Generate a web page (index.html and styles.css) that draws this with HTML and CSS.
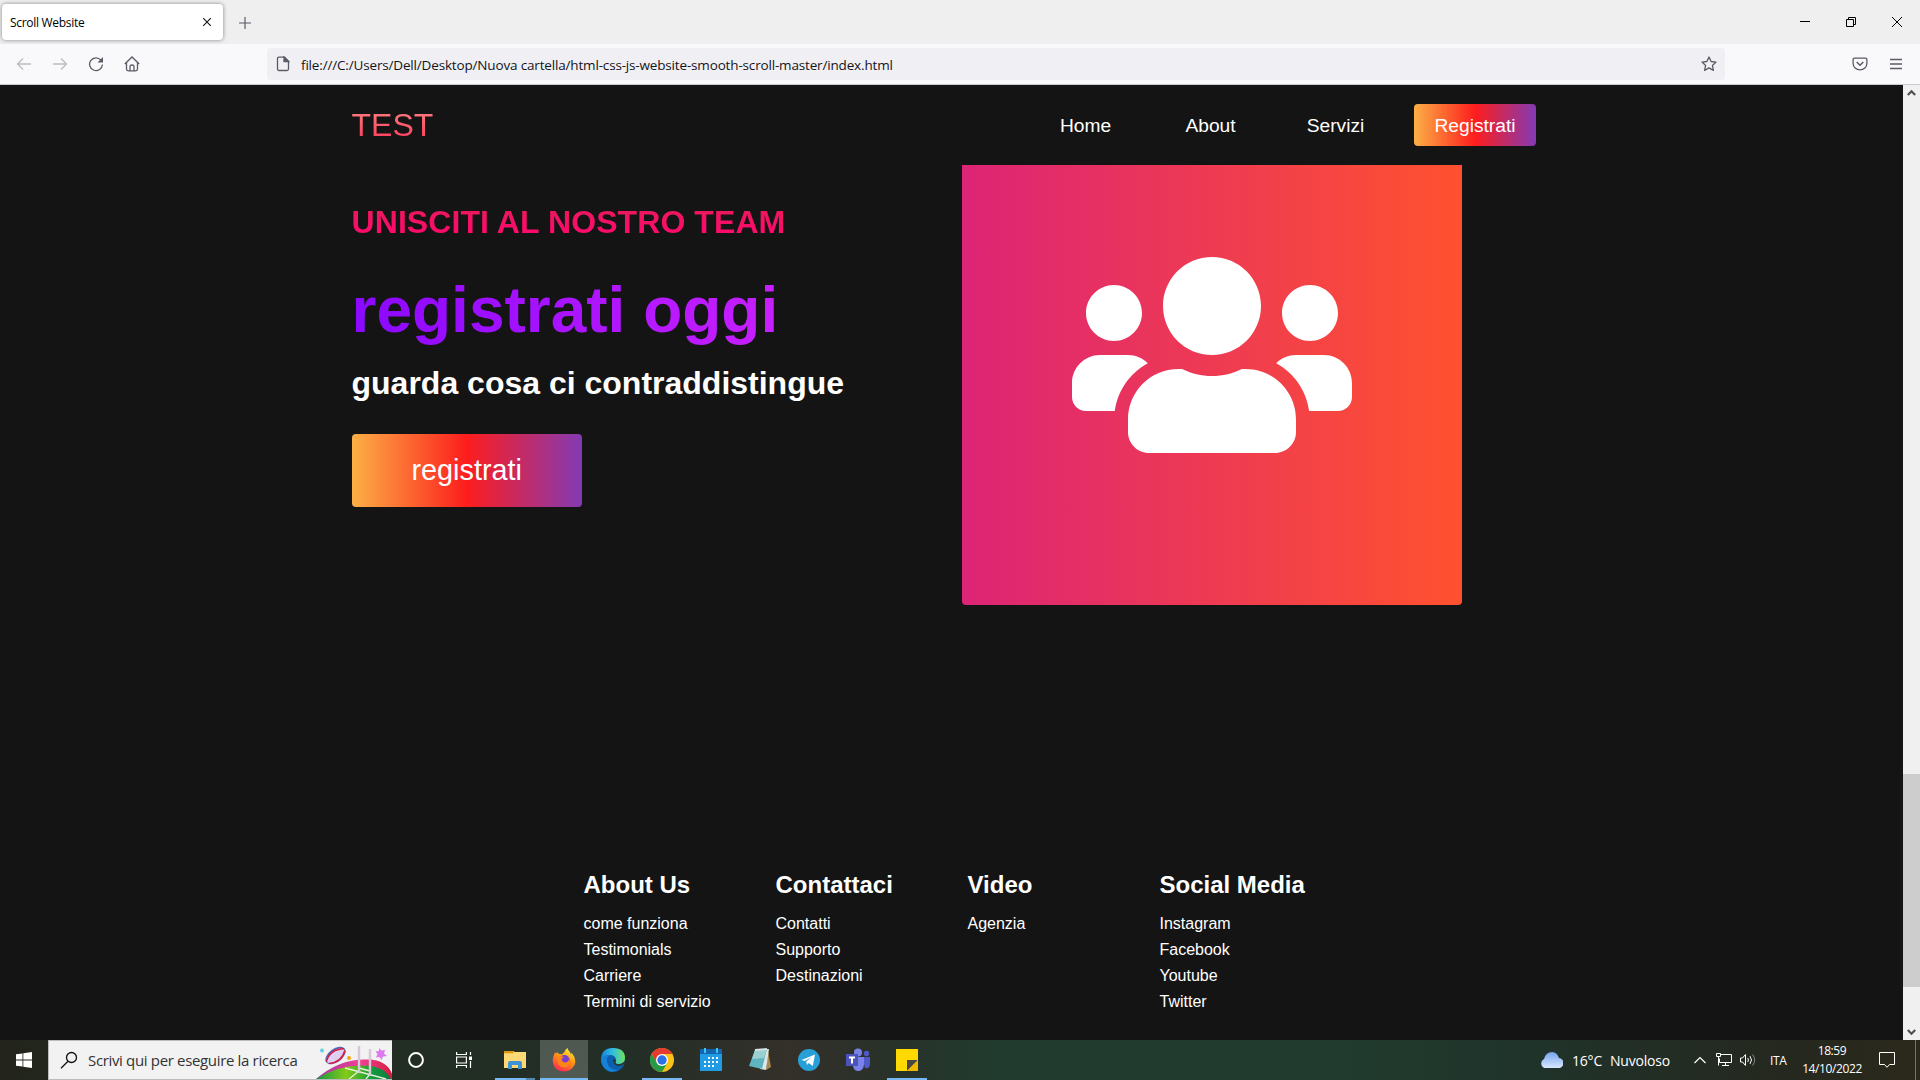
FILE: index.html
```html
<!DOCTYPE html>
<html lang="it">
<head>
<meta charset="utf-8">
<title>Scroll Website</title>
<link rel="stylesheet" href="styles.css">
</head>
<body>
<div class="tabs">
  <div class="tab"><span class="tab-title">Scroll Website</span>
    <svg width="10" height="10" viewBox="0 0 10 10"><path d="M1.200 1.200l7.600 7.600M8.800 1.200L1.200 8.800" stroke="#15141a" stroke-width="1.100"/></svg>
  </div>
  <svg class="newtab" width="12" height="12" viewBox="0 0 12 12"><path d="M6 0v12M0 6h12" stroke="#5b5b66" stroke-width="1.200"/></svg>
  <div class="winctl">
    <svg width="10" height="10" viewBox="0 0 10 10"><path d="M0 4.500h10" stroke="#000"/></svg>
    <svg width="10" height="10" viewBox="0 0 10 10" fill="none" stroke="#000"><path d="M.5 2.500h7v7h-7zM2.500 2.500v-2h7v7h-2"/></svg>
    <svg width="10" height="10" viewBox="0 0 10 10"><path d="M0 0l10 10M10 0L0 10" stroke="#000"/></svg>
  </div>
</div>
<div class="toolbar">
  <div class="navbtns">
    <svg width="16" height="16" viewBox="0 0 16 16" class="ic dim"><path d="M15 8H1.500M7 2.500L1.500 8 7 13.500"/></svg>
    <svg width="16" height="16" viewBox="0 0 16 16" class="ic dim"><path d="M1 8h13.500M9 2.500L14.500 8 9 13.500"/></svg>
    <svg width="16" height="16" viewBox="0 0 16 16" class="ic"><path d="M13 4.200A6.400 6.400 0 1 0 14.400 8.500"/><path d="M15 1v5.500H9.500z" fill="#5b5b66" stroke="none"/></svg>
    <svg width="16" height="16" viewBox="0 0 16 16" class="ic"><path d="M.8 8L8 1l7.200 7M2.500 6.800V13q0 1.800 1.800 1.800h7.400q1.800 0 1.800-1.800V6.800M6 14.500V10.500Q6 9 8 9t2 1.500v4"/></svg>
  </div>
  <div class="urlbar">
    <svg width="14" height="16" viewBox="0 0 14 16" class="ic"><path d="M3 1.200h5.500l4 4V13q0 1.500-1.500 1.500H3Q1.500 14.500 1.500 13V2.700Q1.500 1.200 3 1.200z"/><path d="M8 1v4.700h4.700z" fill="#5b5b66"/></svg>
    <span class="url">file:///C:/Users/Dell/Desktop/Nuova cartella/html-css-js-website-smooth-scroll-master/index.html</span>
    <svg width="16" height="16" viewBox="0 0 16 16" class="ic"><path d="M8 1l2.100 4.500 4.900.6-3.600 3.300 1 5L8 11.900l-4.400 2.500 1-5L1 6.100l4.900-.6z" stroke-linejoin="round"/></svg>
  </div>
  <div class="rightbtns">
    <svg width="16" height="16" viewBox="0 0 16 16" class="ic"><path d="M2.500 2.200h11q1.400 0 1.400 1.400v3.600a6.900 6.700 0 0 1-13.800 0V3.600q0-1.400 1.400-1.400z"/><path d="M4.700 6L8 9.200 11.300 6" stroke-width="1.500"/></svg>
    <svg width="12" height="12" viewBox="0 0 12 12" class="ic"><path d="M0 1.500h12M0 6h12M0 10.500h12"/></svg>
  </div>
</div>
<div class="viewport">
  <div class="page">
    <header class="navbar">
      <div class="logo">TEST</div>
      <nav class="menu"><a>Home</a><a>About</a><a>Servizi</a><div class="btnwrap"><a class="button">Registrati</a></div></nav>
    </header>
    <main class="services">
      <div class="pitch">
        <h1>UNISCITI AL NOSTRO TEAM</h1>
        <h2>registrati oggi</h2>
        <p>guarda cosa ci contraddistingue</p>
        <a class="cta">registrati</a>
      </div>
      <div class="card">
        <svg width="280" height="224" viewBox="0 0 640 512" fill="#fff"><path d="M96 224c35.300 0 64-28.700 64-64s-28.700-64-64-64-64 28.700-64 64 28.700 64 64 64zm448 0c35.300 0 64-28.700 64-64s-28.700-64-64-64-64 28.700-64 64 28.700 64 64 64zm32 32h-64c-17.600 0-33.500 7.100-45.100 18.600 40.300 22.100 68.900 62 75.100 109.400h66c17.700 0 32-14.300 32-32v-32c0-35.300-28.700-64-64-64zm-256 0c61.900 0 112-50.100 112-112S381.900 32 320 32 208 82.100 208 144s50.100 112 112 112zm76.800 32h-8.300c-20.800 10-43.900 16-68.500 16s-47.600-6-68.500-16h-8.300C179.600 288 128 339.600 128 403.200V432c0 26.500 21.500 48 48 48h288c26.500 0 48-21.500 48-48v-28.800c0-63.600-51.600-115.200-115.200-115.200zm-223.700-13.400C161.500 263.100 145.600 256 128 256H64c-35.300 0-64 28.700-64 64v32c0 17.700 14.300 32 32 32h65.900c6.300-47.400 34.900-87.300 75.200-109.400z"/></svg>
      </div>
    </main>
    <footer class="footer">
      <div class="col"><h3>About Us</h3><a>come funziona</a><a>Testimonials</a><a>Carriere</a><a>Termini di servizio</a></div>
      <div class="col"><h3>Contattaci</h3><a>Contatti</a><a>Supporto</a><a>Destinazioni</a></div>
      <div class="col"><h3>Video</h3><a>Agenzia</a></div>
      <div class="col"><h3>Social Media</h3><a>Instagram</a><a>Facebook</a><a>Youtube</a><a>Twitter</a></div>
    </footer>
  </div>
  <div class="scrollbar">
    <svg width="17" height="17" viewBox="0 0 17 17"><path d="M4.800 10L8.500 6.300 12.200 10" fill="none" stroke="#505050" stroke-width="2.200"/></svg>
    <div class="thumb"></div>
    <svg width="17" height="17" viewBox="0 0 17 17"><path d="M4.800 7L8.500 10.700 12.200 7" fill="none" stroke="#505050" stroke-width="2.200"/></svg>
  </div>
</div>
<div class="taskbar">
  <div class="start"><svg width="16" height="16" viewBox="0 0 16 16" fill="#fff"><path d="M0 2.300L6.500 1.400v6.200H0zM7.300 1.300L16 0v7.600H7.300zM0 8.400h6.500v6.200L0 13.700zM7.300 8.400H16V16l-8.700-1.300z"/></svg></div>
  <div class="search">
    <svg width="18" height="18" viewBox="0 0 18 18" fill="none" stroke="#111" stroke-width="1.300"><circle cx="11.500" cy="6.500" r="5"/><path d="M8 10.200L1 17.200"/></svg>
    <span class="search-text">Scrivi qui per eseguire la ricerca</span>
    <svg class="rugby" width="76" height="38" viewBox="0 0 76 38">
      <defs><linearGradient id="grass" x1="0" x2="1"><stop offset="0" stop-color="#159447"/><stop offset=".4" stop-color="#83cc18"/><stop offset=".75" stop-color="#159a3d"/><stop offset="1" stop-color="#087b47"/></linearGradient>
      <linearGradient id="band" x1="0" x2="1"><stop offset="0" stop-color="#a33aa0"/><stop offset=".6" stop-color="#f04095"/><stop offset="1" stop-color="#d51c3c"/></linearGradient></defs>
      <path d="M0 38Q24 17 52 18.500Q71 19 76 33V38z" fill="url(#band)"/>
      <path d="M0 38Q20 25 45 24.500Q68 24 75 38z" fill="url(#grass)"/>
      <path d="M29 27L70 38M43 30L33 38M54 33L50 38M43 27L54 30" fill="none" stroke="#e6f6d4" stroke-width="1.300"/>
      <path d="M43 5V32M54 8V35" fill="none" stroke="#d8c7d6" stroke-width="2.400"/>
      <g transform="rotate(-36 19.500 14.500)"><ellipse cx="19.500" cy="14.500" rx="11.500" ry="6.800" fill="#5a62b4"/><ellipse cx="19.500" cy="15" rx="10.500" ry="5.200" fill="#ded0f2"/><path d="M8.500 14Q19 6 30.500 14M9.500 17Q20 24 30 16" fill="none" stroke="#d41c3e" stroke-width="1.500"/></g>
      <circle cx="6" cy="9.500" r="2" fill="#63cfe8"/><circle cx="33" cy="17" r="2" fill="#f3a712"/>
      <path d="M63 7l2.500 2.500 3.500-.5-1 3.500 3 2.500-4 .5-1.500 3.500-2-3-3.500.5 1.500-3.500-2-2.500 3.500-.5z" fill="#dd78ef"/>
    </svg>
  </div>
  <div class="sys"><svg width="16" height="16" viewBox="0 0 16 16"><circle cx="8" cy="8" r="6.900" fill="none" stroke="#fff" stroke-width="2"/></svg></div>
  <div class="sys"><svg width="16" height="16" viewBox="0 0 16 16" fill="none" stroke="#fff" stroke-width="1.200"><path d="M.6 0v2.500h9.800V0M.6 5h9.800v6H.6zM.6 16v-2.500h9.800V16M14.500 0v3M14.500 9v7"/><path d="M13 4.500h3V8h-3z" fill="#fff" stroke="none"/></svg></div>
  <div class="apps">
    <div class="app open stacked"><svg width="24" height="24" viewBox="0 0 24 24"><path d="M1 3h9l2 1h10v16H1z" fill="#f8cb57"/><path d="M1 3h9v2.500H1z" fill="#dc9710"/><path d="M1 5.500h9l2-1.500h11v16H1z" fill="#ffd975"/><path d="M5 21v-6q0-2 2-2h10q2 0 2 2v6h-4v-4H9v4z" fill="#3f94d5"/></svg></div>
    <div class="app active"><svg width="24" height="24" viewBox="0 0 24 24"><defs><linearGradient id="fx" x1=".8" y1="0" x2=".3" y2="1"><stop offset="0" stop-color="#fff33d"/><stop offset=".45" stop-color="#ff980e"/><stop offset="1" stop-color="#ff2757"/></linearGradient></defs><path d="M2 7l.8-2.500 1.400 1L5 4l2 2 3 .2L12.500 4q.5-2.500 3-4 .3 2.500 2.500 4l.8 2 1-1q5.200 6 2.700 12-3.500 6.500-10.500 6.500Q4 23 1.500 17-.3 11 2 7z" fill="url(#fx)"/><circle cx="12.500" cy="12" r="5" fill="#7540cf"/><path d="M5 8.500q3-1 7 .5L9.500 11q.5 3 3.500 3.500 3 0 4-3 1.500 7.500-5 8-7-.5-7-11z" fill="#ff8418"/></svg></div>
    <div class="app"><svg width="24" height="24" viewBox="0 0 24 24"><defs><linearGradient id="ed" x1="0" x2="1"><stop offset="0" stop-color="#1683d8"/><stop offset=".5" stop-color="#32bfdf"/><stop offset="1" stop-color="#70e25c"/></linearGradient></defs><circle cx="12" cy="12" r="12" fill="#0d5fad"/><path d="M0 12Q0 0 12 0t12 10q0 6-7 6-4 0-2-3.500Q15 7 9 7 2 7 0 12z" fill="url(#ed)"/><path d="M0 12q2-5 9-5Q5 9 6 14q2 8 11 8Q8 27 2 18 0 15 0 12z" fill="#1681d8"/><path d="M12.500 11Q11 15 15 17.500q4 1.500 8-1.500l1.500 0v-4q-3 4-7 4-4 0-2.500-3.500Q14.500 10.500 12.500 11z" fill="#263b35"/></svg></div>
    <div class="app open"><svg width="24" height="24" viewBox="0 0 24 24"><circle cx="12" cy="12" r="12" fill="#fbc116"/><path d="M1.600 6A12 12 0 0 1 22.400 6H12l-5.200 9z" fill="#e53b2f"/><path d="M1.600 6A12 12 0 0 0 12 24l5.200-9H6.800z" fill="#259b48"/><circle cx="12" cy="12" r="6" fill="#fff"/><circle cx="12" cy="12" r="4.700" fill="#2a70e8"/></svg></div>
    <div class="app"><svg width="24" height="24" viewBox="0 0 24 24"><path d="M1 1h22v22H1z" fill="#209ce5"/><path d="M1 1h22v5H1z" fill="#1265ae"/><path d="M5 0h2v5H5zM17 0h2v5h-2z" fill="#3ec4f4"/><path d="M9 10h11M5 14h15M5 18h11" stroke="#fff" stroke-width="2" stroke-dasharray="2 2"/></svg></div>
    <div class="app"><svg width="24" height="24" viewBox="0 0 24 24"><path d="M20 3l3 16-5 3z" fill="#a78850"/><path d="M8 2l13-1-3 21-6-1z" fill="#e1e5e3"/><path d="M7 2l12-1-5 20-13-3z" fill="#5fb4c1"/><path d="M7 2l12-1-3 9-12 1z" fill="#9bd0d3"/><path d="M7 2l12-1" stroke="#d5e2e2" stroke-width="2"/></svg></div>
    <div class="app"><svg width="24" height="24" viewBox="0 0 24 24"><circle cx="12" cy="12" r="11" fill="#279fd9"/><path d="M4.500 12L18 6.500 15.800 18l-4-3-2 2-.5-3.500 5.500-4.500-7 4z" fill="#fff"/></svg></div>
    <div class="app"><svg width="24" height="24" viewBox="0 0 24 24"><circle cx="12" cy="4.500" r="4" fill="#7b83eb"/><circle cx="20.500" cy="5.500" r="2.700" fill="#5059c9"/><path d="M16 9h8v7q0 5-5 4z" fill="#5059c9"/><path d="M7 9h11v8q-1 6-6 6-4 0-5-5z" fill="#7b83eb"/><path d="M0 6h12v12H0z" fill="#4b53bc"/><path d="M3 8.500h6v2H7v5H5v-5H3z" fill="#fff"/></svg></div>
    <div class="app open"><svg width="24" height="24" viewBox="0 0 24 24"><path d="M1 1h22v22H1z" fill="#ffda00"/><path d="M12 23V12h11z" fill="#474747"/><path d="M12 23l11-11v11z" fill="#efb700"/></svg></div>
  </div>
  <div class="tray">
    <svg class="cloud" width="24" height="16" viewBox="0 0 24 16"><defs><linearGradient id="cl" x2="0" y2="1"><stop offset="0" stop-color="#73a4ed"/><stop offset="1" stop-color="#d9e8ff"/></linearGradient></defs><path d="M5 16a5 5 0 0 1 0-9Q7 0 13 0q5 0 7 6a5 5 0 0 1-1 10z" fill="url(#cl)"/></svg>
    <span class="temp">16°C</span><span class="weather">Nuvoloso</span>
    <svg class="chev" width="12" height="8" viewBox="0 0 12 8"><path d="M.5 7L6 1.500 11.500 7" fill="none" stroke="#fff" stroke-width="1.200"/></svg>
    <svg class="net" width="16" height="14" viewBox="0 0 16 14" fill="none" stroke="#fff"><path d="M5 1.500h10.500v8H3.500v-4M9.500 9.500v3M6 12.500h7M.5.500h4v3h-4zM2.500 3.500v9"/></svg>
    <svg class="vol" width="17" height="14" viewBox="0 0 17 14" fill="none" stroke="#fff"><path d="M.5 5v4h2l3 3.500v-11L2.500 5zM7.700 5q1.600 2 0 4M10 3.200q3 3.800 0 7.600"/><path d="M12.500 1.500q4.500 5.500 0 11" stroke="#85877c"/></svg>
    <span class="lang">ITA</span>
    <div class="clock"><span>18:59</span><span class="date">14/10/2022</span></div>
    <svg class="notif" width="16" height="16" viewBox="0 0 16 16"><path d="M.5.500h15v12h-5L8 15.300 5.500 12.500h-5z" fill="none" stroke="#fff"/></svg>
    <div class="peek"></div>
  </div>
</div>
</body>
</html>
```
FILE: styles.css
```css
* { box-sizing: border-box; margin: 0; padding: 0; }
body { width: 1920px; height: 1080px; overflow: hidden; display: flex; flex-direction: column; font-family: "Open Sans", "Noto Sans", sans-serif; background: #141414; }
svg { display: block; flex: none; }
span { white-space: nowrap; }
.tabs { height: 44px; background: #efefef; display: flex; align-items: center; padding-left: 2px; }
.tab { width: 221px; height: 36px; background: #fff; border-radius: 4px; box-shadow: 0 0 4px rgba(0,0,0,.45); display: flex; align-items: center; justify-content: space-between; padding: 0 11px 0 8px; }
.tab-title { font-size: 12px; letter-spacing: -.3px; color: #000; }
.newtab { margin: 1px 0 0 16px; }
.winctl { margin-left: auto; display: flex; gap: 36px; padding-right: 18px; }
.toolbar { height: 41px; background: #f9f9fb; border-bottom: 1px solid #ccc; display: flex; align-items: center; }
.ic { fill: none; stroke: #5b5b66; stroke-width: 1.300; }
.dim { stroke: #bcbcc1; }
.navbtns { display: flex; gap: 20px; padding-left: 16px; width: 267px; }
.urlbar { width: 1458px; height: 32px; border-radius: 4px; background: #f0f0f4; display: flex; align-items: center; padding: 0 8px 0 9px; }
.url { font-size: 13.500px; letter-spacing: -.165px; color: #15141a; margin-left: 11px; padding-top: 2px; flex: 1; }
.rightbtns { margin-left: auto; display: flex; align-items: center; gap: 22px; padding-right: 18px; }
.viewport { height: 955px; display: flex; background: #141414; }
.page { width: 1903px; font-family: "Liberation Sans", Arial, sans-serif; color: #fff; }
.navbar { height: 80px; width: 1200px; margin-left: 351.500px; display: flex; align-items: center; justify-content: space-between; }
.logo { font-size: 32px; background: linear-gradient(to top, #ff0844, #ffb199); line-height: 80px; -webkit-background-clip: text; background-clip: text; color: transparent; }
.menu { display: flex; align-items: center; font-size: 19.200px; line-height: 22px; }
.menu > a { width: 125px; text-align: center; padding-top: 1px; }
.btnwrap { padding: 0 15.500px 0 16px; }
.button { display: block; width: 122px; padding: 11px 0 9px; text-align: center; border-radius: 4px; background: linear-gradient(to right, #fcb045, #fd1d1d 50%, #833ab4); }
.services { display: flex; height: 687px; padding-left: 351.500px; }
.pitch { width: 610.500px; padding-top: 39px; display: flex; flex-direction: column; align-items: flex-start; font-weight: bold; }
.pitch h1 { font-size: 32px; line-height: 37px; letter-spacing: .08px; background: linear-gradient(to top, #ff0a6c 22%, #e61b5b); -webkit-background-clip: text; background-clip: text; color: transparent; }
.pitch h2 { font-size: 64px; line-height: 74px; margin-top: 32px; background: linear-gradient(to right, #8b08ff, #c81fff); -webkit-background-clip: text; background-clip: text; color: transparent; }
.pitch p { font-size: 32px; line-height: 37px; margin-top: 18px; }
.cta { margin-top: 32px; font-size: 28.800px; line-height: 33px; font-weight: normal; padding: 20px 60px; border-radius: 4px; background: linear-gradient(to right, #fcb045, #fd1d1d 50%, #833ab4); }
.card { width: 500px; height: 440px; border-radius: 0 0 4px 4px; background: linear-gradient(to right, #dd2476, #ff512f); display: flex; padding: 78px 0 0 109.700px; }
.footer { display: flex; padding-left: 583.500px; }
.col { width: 192px; display: flex; flex-direction: column; }
.col h3 { font-size: 24px; line-height: 28px; margin: 19px 0 16px; white-space: nowrap; }
.col a { font-size: 16px; line-height: 18px; margin-bottom: 8px; }
.scrollbar { width: 17px; background: #f0f0f0; display: flex; flex-direction: column; }
.thumb { height: 213px; margin: 672px 0 36px; background: #cdcdcd; }
.taskbar { height: 40px; display: flex; color: #fff; background: linear-gradient(to right, #23251c, #222e24 22%, #232e26 33%, #34302a 41%, #293129 46%, #213b2f 52%, #213b2e 70%, #20332a 80%, #25281f 93%, #2b291b); }
.start { width: 48px; display: grid; place-items: center; }
.search { width: 344px; background: #f2f2f2; border: 1px solid #bbb; border-right: 0; display: flex; align-items: center; padding-left: 11px; overflow: hidden; }
.search-text { font-size: 15px; letter-spacing: -.34px; color: #333; width: 229px; margin-left: 10px; }
.rugby { margin-left: -1px; }
.sys { width: 48px; display: grid; place-items: center; }
.apps { display: flex; margin-left: 2px; }
.app { width: 49px; display: grid; place-items: center; position: relative; }
.app.open::after { content: ""; position: absolute; left: 5px; bottom: 0; width: 40px; height: 2px; background: #76b9f5; }
.app.stacked::after { background: linear-gradient(to right, #76b9f5 31px, #5685ae 31px); }
.app.active { background: linear-gradient(#4f5751, #505952); width: 48px; margin: 0 0 0 1px; }
.app.active::after { content: ""; position: absolute; left: 0; bottom: 0; width: 48px; height: 2px; background: #76b9f5; }
.tray { margin-left: auto; display: flex; align-items: center; font-size: 14px; }
.temp { width: 38px; margin-left: 9px; letter-spacing: -.2px; }
.weather { width: 60px; letter-spacing: -.2px; }
.chev { margin-left: 24px; }
.net { margin-left: 10px; }
.vol { margin-left: 8px; }
.lang { font-size: 12px; width: 17px; margin-left: 13px; letter-spacing: -.3px; }
.clock { width: 58px; margin-left: 16px; display: flex; flex-direction: column; align-items: center; font-size: 12px; line-height: 18px; letter-spacing: -.4px; }
.notif { margin-left: 18px; }
.peek { width: 1px; height: 40px; margin: 0 4px 0 20px; background: #74756b; }
```
